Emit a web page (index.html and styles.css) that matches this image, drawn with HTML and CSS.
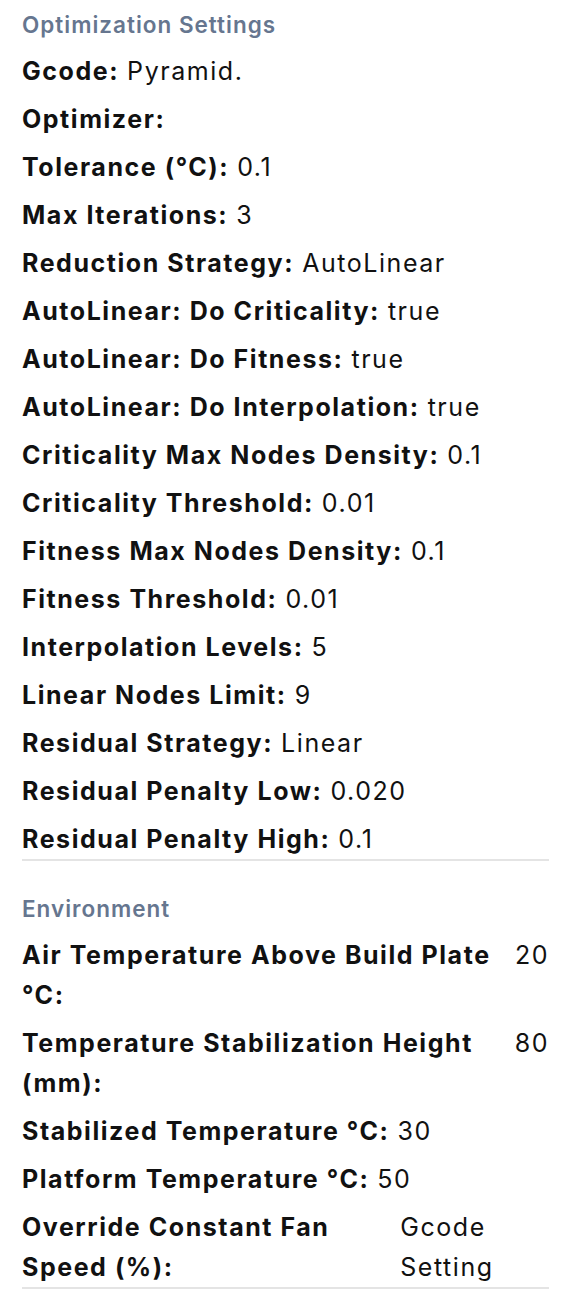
FILE: index.html
```html
<!DOCTYPE html>
<html lang="en">
<head>
<meta charset="utf-8">
<title>Settings</title>
<link rel="stylesheet" href="styles.css">
</head>
<body>
<div class="panel">
  <section class="section">
    <h2 class="section-title">Optimization Settings</h2>
    <div class="rows">
      <div class="row"><span class="label">Gcode:</span><span class="value">Pyramid.</span></div>
      <div class="row"><span class="label">Optimizer:</span><span class="value"></span></div>
      <div class="row"><span class="label">Tolerance (°C):</span><span class="value">0.1</span></div>
      <div class="row"><span class="label">Max Iterations:</span><span class="value">3</span></div>
      <div class="row"><span class="label">Reduction Strategy:</span><span class="value">AutoLinear</span></div>
      <div class="row"><span class="label">AutoLinear: Do Criticality:</span><span class="value">true</span></div>
      <div class="row"><span class="label">AutoLinear: Do Fitness:</span><span class="value">true</span></div>
      <div class="row"><span class="label">AutoLinear: Do Interpolation:</span><span class="value">true</span></div>
      <div class="row"><span class="label">Criticality Max Nodes Density:</span><span class="value">0.1</span></div>
      <div class="row"><span class="label">Criticality Threshold:</span><span class="value">0.01</span></div>
      <div class="row"><span class="label">Fitness Max Nodes Density:</span><span class="value">0.1</span></div>
      <div class="row"><span class="label">Fitness Threshold:</span><span class="value">0.01</span></div>
      <div class="row"><span class="label">Interpolation Levels:</span><span class="value">5</span></div>
      <div class="row"><span class="label">Linear Nodes Limit:</span><span class="value">9</span></div>
      <div class="row"><span class="label">Residual Strategy:</span><span class="value">Linear</span></div>
      <div class="row"><span class="label">Residual Penalty Low:</span><span class="value">0.020</span></div>
      <div class="row"><span class="label">Residual Penalty High:</span><span class="value">0.1</span></div>
    </div>
  </section>
  <section class="section section-next">
    <h2 class="section-title">Environment</h2>
    <div class="rows">
      <div class="row"><span class="label">Air Temperature Above Build Plate °C:</span><span class="value">20</span></div>
      <div class="row"><span class="label">Temperature Stabilization Height (mm):</span><span class="value">80</span></div>
      <div class="row"><span class="label">Stabilized Temperature °C:</span><span class="value">30</span></div>
      <div class="row"><span class="label">Platform Temperature °C:</span><span class="value">50</span></div>
      <div class="row"><span class="label">Override Constant Fan Speed (%):</span><span class="value">Gcode Setting</span></div>
    </div>
  </section>
</div>
</body>
</html>
```
FILE: styles.css
```css
html, body {
  margin: 0;
  padding: 0;
  background: #ffffff;
}

body {
  font-family: Inter, "Noto Sans", "Liberation Sans", sans-serif;
  color: #111111;
}

.panel {
  padding: 11px 23px 0 22px;
}

.section-title {
  margin: 0 0 12px 0;
  font-size: 22.5px;
  line-height: 28px;
  font-weight: 600;
  letter-spacing: 1px;
  color: #66768f;
}

.section-next {
  margin-top: 34px;
}

.rows {
  display: flex;
  flex-direction: column;
  gap: 8px;
  border-bottom: 2px solid #e4e4e4;
}

.row {
  display: flex;
  gap: 8px;
  font-size: 25px;
  line-height: 40px;
  letter-spacing: 1.55px;
}

.label {
  font-weight: 700;
}

.value {
  font-weight: 400;
}
```
